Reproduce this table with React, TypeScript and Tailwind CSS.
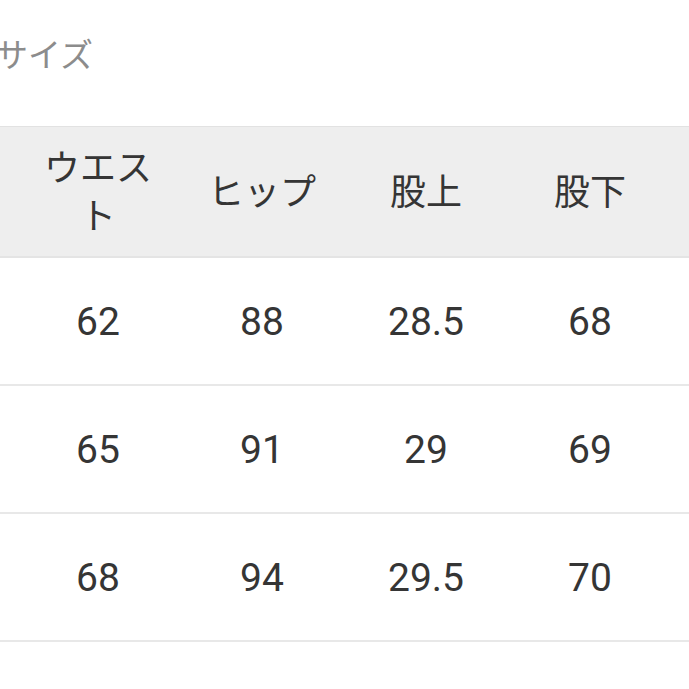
import React from "react";

const headers = ["", "ウエスト", "ヒップ", "股上", "股下", ""];
const rows = [
  ["", "62", "88", "28.5", "68", ""],
  ["", "65", "91", "29", "69", ""],
  ["", "68", "94", "29.5", "70", ""],
];

export default function App() {
  return (
    <div
      className="w-[689px] h-[689px] overflow-hidden bg-white text-[#353535]"
      style={{ fontFamily: "Roboto, 'Noto Sans CJK JP', sans-serif" }}
    >
      <div className="h-[126px] pt-[32px]">
        <div className="ml-[-5px] text-[33px] leading-[48px] text-[#8c8c8c] whitespace-nowrap">
          サイズ
        </div>
      </div>
      <div className="ml-[-148px] w-[984px]">
        <div className="grid grid-cols-[repeat(6,164px)] h-[132px] bg-[#eeeeee] border-t border-b-2 border-t-[#e2e2e2] border-b-[#e4e4e4]">
          {headers.map((h, i) => (
            <div
              key={i}
              className="flex items-center justify-center px-4 pt-[2px] text-center text-[36px] leading-[48px]"
            >
              {h}
            </div>
          ))}
        </div>
        {rows.map((r, ri) => (
          <div
            key={ri}
            className="grid grid-cols-[repeat(6,164px)] h-[128px] border-b-2 border-[#e8e8e8]"
          >
            {r.map((c, ci) => (
              <div
                key={ci}
                className="flex items-center justify-center pt-[3px] text-[39px] leading-none"
              >
                {c}
              </div>
            ))}
          </div>
        ))}
      </div>
    </div>
  );
}
